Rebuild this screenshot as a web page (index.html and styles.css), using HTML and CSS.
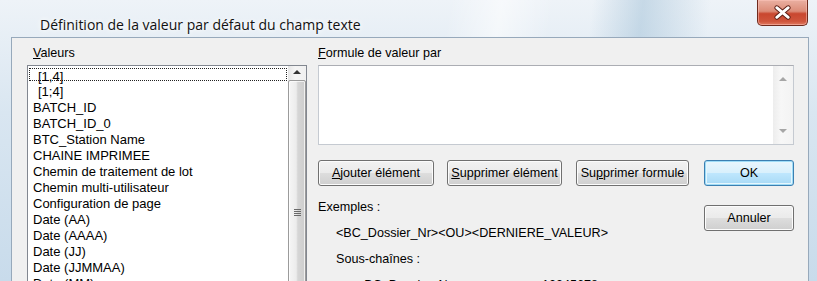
FILE: index.html
```html
<!DOCTYPE html>
<html lang="fr">
<head>
    <meta charset="UTF-8">
    <title>Définition de la valeur par défaut du champ texte</title>
    <link rel="stylesheet" href="styles.css">
</head>
<body>
    <div class="window">
        <div class="titlebar">
            <span class="title">Définition de la valeur par défaut du champ texte</span>
            <button class="close" title="Fermer">
                <svg width="51" height="26" viewBox="0 0 51 26">
                    <path d="M19.5 7.5 L31.5 17.5 M31.5 7.5 L19.5 17.5" stroke="#5b1c12" stroke-width="5" stroke-linecap="round"/>
                    <path d="M19.5 7.5 L31.5 17.5 M31.5 7.5 L19.5 17.5" stroke="#ffffff" stroke-width="3" stroke-linecap="round"/>
                </svg>
            </button>
        </div>

        <div class="client">
            <!-- Liste des valeurs -->
            <div class="values">
                <div class="label"><u>V</u>aleurs</div>
                <div class="listbox">
                    <div class="items">
                        <div class="item focus indent">[1,4]</div>
                        <div class="item indent">[1;4]</div>
                        <div class="item">BATCH_ID</div>
                        <div class="item">BATCH_ID_0</div>
                        <div class="item">BTC_Station Name</div>
                        <div class="item">CHAINE IMPRIMEE</div>
                        <div class="item">Chemin de traitement de lot</div>
                        <div class="item">Chemin multi-utilisateur</div>
                        <div class="item">Configuration de page</div>
                        <div class="item">Date (AA)</div>
                        <div class="item">Date (AAAA)</div>
                        <div class="item">Date (JJ)</div>
                        <div class="item">Date (JJMMAA)</div>
                        <div class="item">Date (MM)</div>
                    </div>
                    <div class="vscroll">
                        <div class="arrow"><span class="tri up"></span></div>
                        <div class="thumb"><span class="grip"></span></div>
                    </div>
                </div>
            </div>

            <!-- Formule -->
            <div class="formula">
                <div class="label"><u>F</u>ormule de valeur par</div>
                <div class="editbox">
                    <div class="edit-area"></div>
                    <div class="vscroll disabled">
                        <span class="tri up"></span>
                        <span class="tri down"></span>
                    </div>
                </div>
                <div class="actions">
                    <button class="btn btn-add"><u>A</u>jouter élément</button>
                    <button class="btn btn-del"><u>S</u>upprimer élément</button>
                    <button class="btn btn-clear">Su<u>p</u>primer formule</button>
                    <button class="btn btn-ok">OK</button>
                </div>
                <div class="lower">
                    <div class="examples">
                        <div>Exemples :</div>
                        <div class="ex-line">&lt;BC_Dossier_Nr&gt;&lt;OU&gt;&lt;DERNIERE_VALEUR&gt;</div>
                        <div class="ex-line">Sous-chaînes :</div>
                        <div class="ex-sub"><span class="ex-key">&lt;BC_Dossier_Nr&gt;</span><span>12345678</span></div>
                    </div>
                    <button class="btn btn-cancel">Annuler</button>
                </div>
            </div>
        </div>
    </div>
</body>
</html>
```

FILE: styles.css
```css
body {
    margin: 0;
    padding: 0;
    background: #ffffff;
}
.window {
    width: 817px;
    height: 281px;
    overflow: hidden;
    display: flex;
    flex-direction: column;
    background:
        linear-gradient(100deg, rgba(255,255,255,0) 52%, rgba(255,255,255,0.55) 58%, rgba(255,255,255,0) 64%),
        linear-gradient(96deg, rgba(255,255,255,0) 70%, rgba(150,185,210,0.45) 76%, rgba(255,255,255,0) 84%),
        linear-gradient(to bottom, #eef3f8 0%, #d9e6f1 40%, #c8dbeb 100%);
}
.titlebar {
    height: 37px;
    display: flex;
    justify-content: space-between;
    align-items: flex-start;
    padding-left: 40px;
    flex-shrink: 0;
}
.title {
    margin-top: 15px;
    font-family: "Open Sans", "Noto Sans", sans-serif;
    font-size: 14px;
    line-height: 20px;
    color: #111;
    text-shadow: 0 0 8px #ffffff, 0 0 4px #ffffff;
}
.close {
    width: 51px;
    height: 26px;
    margin-right: 9px;
    padding: 0;
    border: 1px solid #6f2a1d;
    border-top: none;
    border-radius: 0 0 5px 5px;
    background: linear-gradient(to bottom, #eab0a2 0%, #dc8c78 45%, #c9472f 55%, #cf553c 85%, #e07a60 100%);
    box-shadow: inset 0 0 0 1px rgba(255,200,190,0.5);
    display: flex;
    align-items: center;
    justify-content: center;
}
.close svg {
    display: block;
}

/* zone client */
.client {
    flex: 1;
    margin: 0 8px 0 11px;
    background: #f0f0f0;
    border: 1px solid #97a9bb;
    border-bottom: none;
    display: flex;
    gap: 11px;
    padding: 7px 14px 0 15px;
    font-family: "Liberation Sans", Arial, sans-serif;
    color: #000;
    overflow: hidden;
}
.label {
    font-size: 12.6px;
    line-height: 16px;
    margin-bottom: 4px;
    padding-left: 6px;
}
.formula .label {
    padding-left: 0;
}
.values {
    width: 280px;
    flex-shrink: 0;
}
.listbox {
    height: 240px;
    background: #fff;
    border: 1px solid #828790;
    display: flex;
}
.items {
    flex: 1;
    padding: 2px 1px 0 1px;
    font-size: 13px;
    line-height: 16px;
}
.item {
    height: 16px;
    padding-left: 4px;
    white-space: nowrap;
}
.item.focus {
    box-sizing: border-box;
    height: 13px;
    margin-bottom: 3px;
    border: 1px dotted #222;
    padding-left: 3px;
}
.item.indent {
    padding-left: 9px;
}
.item.focus.indent {
    padding-left: 8px;
}
.vscroll {
    width: 18px;
    flex-shrink: 0;
    background: linear-gradient(to right, #e6e6e6, #f5f5f5 40%, #f0f0f0);
    display: flex;
    flex-direction: column;
    align-items: center;
}
.arrow {
    width: 100%;
    height: 22px;
    display: flex;
    align-items: center;
    justify-content: center;
}
.tri {
    width: 0;
    height: 0;
    border-left: 4px solid transparent;
    border-right: 4px solid transparent;
}
.tri.up {
    border-bottom: 4px solid #333;
}
.tri.down {
    border-top: 4px solid #333;
}
.thumb {
    box-sizing: border-box;
    width: 18px;
    height: 300px;
    margin-top: 2px;
    border: 1px solid #9b9b9b;
    border-radius: 2px;
    background: linear-gradient(to right, #f6f6f6 0%, #ececec 45%, #d6d6d6 55%, #cdcdcd 100%);
    box-shadow: inset 0 0 0 1px rgba(255,255,255,0.7);
    display: flex;
    justify-content: center;
    padding-top: 128px;
}
.grip {
    width: 7px;
    height: 7px;
    background: repeating-linear-gradient(to bottom, #6a6a6a 0, #6a6a6a 1px, transparent 1px, transparent 2px);
}

/* formule */
.formula {
    width: 476px;
    flex-shrink: 0;
}
.editbox {
    height: 80px;
    box-sizing: border-box;
    border: 1px solid #c5cad1;
    border-top-color: #abadb3;
    background: #fff;
    display: flex;
}
.edit-area {
    flex: 1;
}
.vscroll.disabled {
    width: 20px;
    background: linear-gradient(to right, #ededed, #f7f7f7 40%, #f3f3f3);
    justify-content: space-between;
    padding: 11px 0 11px;
}
.vscroll.disabled .tri.up {
    border-bottom-color: #a6a6a6;
}
.vscroll.disabled .tri.down {
    border-top-color: #a6a6a6;
}
.actions {
    display: flex;
    margin-top: 15px;
}
.btn {
    height: 26px;
    padding: 0;
    font-family: "Liberation Sans", Arial, sans-serif;
    font-size: 12.6px;
    color: #000;
    border: 1px solid #707070;
    border-radius: 3px;
    background: linear-gradient(to bottom, #f2f2f2 0%, #ebebeb 48%, #dddddd 52%, #cfcfcf 100%);
    box-shadow: inset 0 0 0 1px #fcfcfc;
}
.btn-add {
    width: 116px;
}
.btn-del {
    width: 115px;
    margin-left: 13px;
}
.btn-clear {
    width: 113px;
    margin-left: 14px;
}
.btn-ok {
    width: 90px;
    margin-left: 15px;
    border-color: #3c7fb1;
    background: linear-gradient(to bottom, #eaf6fd 0%, #d9f0fc 48%, #bee6fd 52%, #a7d9f5 100%);
    box-shadow: inset 0 0 0 1px #9fdcf7, inset 0 0 0 2px #e6f6fd;
}
.lower {
    display: flex;
    justify-content: space-between;
    align-items: flex-start;
}
.examples {
    margin-top: 8px;
    font-size: 12.6px;
    line-height: 26px;
}
.ex-line {
    padding-left: 18px;
}
.ex-sub {
    display: flex;
    padding-left: 39px;
}
.ex-key {
    width: 185px;
}
.btn-cancel {
    width: 90px;
    margin-top: 19px;
}
```
